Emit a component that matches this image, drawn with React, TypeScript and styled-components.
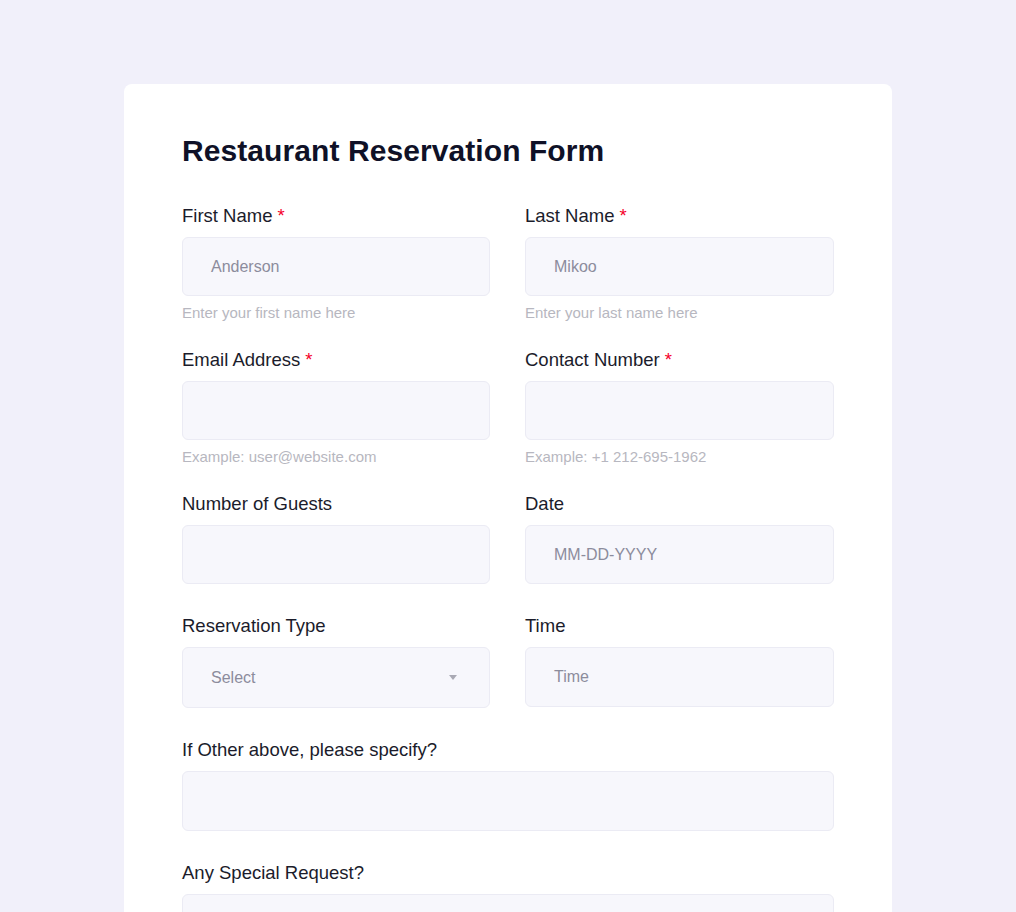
import React from "react";
import styled, { createGlobalStyle } from "styled-components";

const Global = createGlobalStyle`
  html, body { margin: 0; padding: 0; }
  body {
    background: #f1f0fa;
    font-family: "Liberation Sans", Arial, sans-serif;
  }
`;

const Page = styled.div`
  padding-top: 84px;
  display: flex;
  justify-content: center;
`;

const Card = styled.form`
  width: 768px;
  box-sizing: border-box;
  background: #ffffff;
  border-radius: 8px;
  padding: 49px 58px 60px;
`;

const Title = styled.h1`
  margin: 0 0 36px;
  font-size: 30px;
  line-height: 36px;
  font-weight: 700;
  letter-spacing: 0.08px;
  color: #0f1127;
`;

const Grid = styled.div`
  display: grid;
  grid-template-columns: 308px 309px;
  column-gap: 35px;
  row-gap: 31px;
`;

const Field = styled.div<{ $full?: boolean }>`
  display: flex;
  flex-direction: column;
  grid-column: ${(p) => (p.$full ? "1 / -1" : "auto")};
`;

const Label = styled.label`
  font-size: 18.5px;
  line-height: 22px;
  color: #1b1c2b;
  margin-bottom: 10px;
`;

const Req = styled.span`
  color: #f5002a;
  margin-left: 5px;
`;

const InputBox = styled.div<{ $h?: number }>`
  height: ${(p) => p.$h ?? 59}px;
  box-sizing: border-box;
  background: #f7f7fc;
  border: 1px solid #ebebf4;
  border-radius: 6px;
  display: flex;
  align-items: center;
  justify-content: space-between;
  padding: 0 32px 0 28px;
  font-size: 16px;
  color: #8c8c9c;
`;

const Arrow = styled.span`
  width: 0;
  height: 0;
  border-left: 4px solid transparent;
  border-right: 4px solid transparent;
  border-top: 5px solid #a9a9b4;
`;

const Helper = styled.div`
  margin-top: 11px;
  font-size: 15px;
  line-height: 11px;
  color: #b7b7c0;
`;

type F = {
  label: string;
  req?: boolean;
  value?: string;
  helper?: string;
  full?: boolean;
  select?: boolean;
  h?: number;
};

const fields: F[] = [
  { label: "First Name", req: true, value: "Anderson", helper: "Enter your first name here" },
  { label: "Last Name", req: true, value: "Mikoo", helper: "Enter your last name here" },
  { label: "Email Address", req: true, helper: "Example: user@website.com" },
  { label: "Contact Number", req: true, helper: "Example: +1 212-695-1962" },
  { label: "Number of Guests" },
  { label: "Date", value: "MM-DD-YYYY" },
  { label: "Reservation Type", value: "Select", select: true, h: 61 },
  { label: "Time", value: "Time", h: 60 },
  { label: "If Other above, please specify?", full: true, h: 60 },
  { label: "Any Special Request?", full: true, h: 100 },
];

export default function App() {
  return (
    <>
      <Global />
      <Page>
        <Card>
          <Title>Restaurant Reservation Form</Title>
          <Grid>
            {fields.map((f) => (
              <Field key={f.label} $full={f.full}>
                <Label>
                  {f.label}
                  {f.req && <Req>*</Req>}
                </Label>
                <InputBox $h={f.h}>
                  <span>{f.value}</span>
                  {f.select && <Arrow />}
                </InputBox>
                {f.helper && <Helper>{f.helper}</Helper>}
              </Field>
            ))}
          </Grid>
        </Card>
      </Page>
    </>
  );
}
